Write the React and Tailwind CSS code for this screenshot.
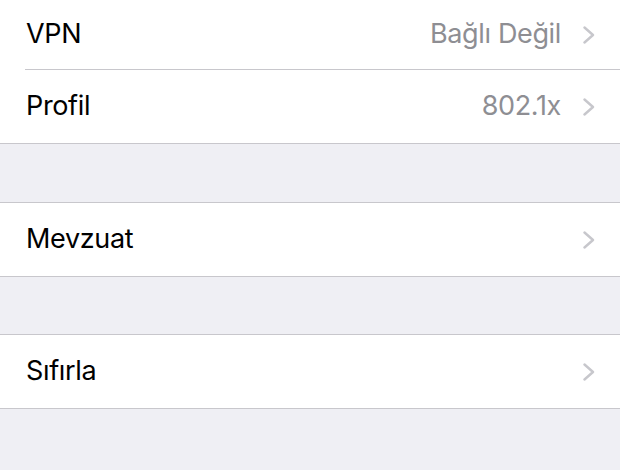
import React from "react";

function Chevron() {
  return (
    <svg width="12" height="18" viewBox="0 0 12 18" className="shrink-0">
      <polyline points="1.5,1.5 10,9 1.5,16.5" fill="none" stroke="#c7c7cc" strokeWidth="2.4" strokeLinecap="round" strokeLinejoin="round" />
    </svg>
  );
}

function Row({ label, value, last, first }) {
  return (
    <div className={"pl-[25px] " + (first ? "h-[70px]" : "h-[73px]")}>
      <div className={"flex h-full items-center pr-[25px] " + (last ? "" : "border-b border-[#c8c7cc]")}>
        <span className="flex-1 pl-[1px] text-[27px] text-black tracking-[-0.35px]">{label}</span>
        {value && <span className="mr-[22px] text-[27px] text-[#8e8e93] tracking-[-0.35px]">{value}</span>}
        <Chevron />
      </div>
    </div>
  );
}

export default function App() {
  return (
    <div className="h-[470px] w-[620px] overflow-hidden bg-[#efeff4]" style={{ fontFamily: "Inter, 'Noto Sans', sans-serif" }}>
      <div className="bg-white border-b border-[#c8c7cc]">
        <Row label="VPN" value="Bağlı Değil" first />
        <Row label="Profil" value="802.1x" last />
      </div>
      <div className="h-[58px]" />
      <div className="bg-white border-y border-[#c8c7cc]">
        <Row label="Mevzuat" last />
      </div>
      <div className="h-[57px]" />
      <div className="bg-white border-y border-[#c8c7cc]">
        <Row label="Sıfırla" last />
      </div>
    </div>
  );
}
